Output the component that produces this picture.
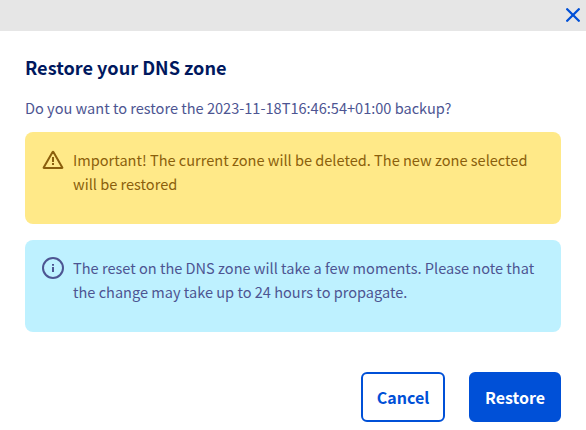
<script>
  const warning = ['Important! The current zone will be deleted. The new zone selected', 'will be restored'];
  const info = ['The reset on the DNS zone will take a few moments. Please note that', 'the change may take up to 24 hours to propagate.'];
</script>

<div class="modal">
  <header>
    <button class="close" aria-label="Close">
      <svg width="14" height="14" viewBox="0 0 14 14"><path d="M1.2 1.2 12.8 12.8M12.8 1.2 1.2 12.8" /></svg>
    </button>
  </header>
  <main>
    <h1>Restore your DNS zone</h1>
    <p class="question">Do you want to restore the 2023-11-18T16:46:54+01:00 backup?</p>
    <section class="message warning">
      <svg width="24" height="24" viewBox="0 0 24 24">
        <path class="outline" d="M11.6 4.1 2.7 19.4Q2.4 20 3 20H21Q21.6 20 21.3 19.4L12.4 4.1Q12 3.5 11.6 4.1z" />
        <path class="mark" d="M12 9v5M12 15v2" />
      </svg>
      <p>{warning[0]}<br />{warning[1]}</p>
    </section>
    <section class="message info">
      <svg width="24" height="24" viewBox="0 0 24 24">
        <circle class="outline" cx="12" cy="12" r="10" />
        <path class="mark" d="M12 8v1.7M12 11v5" />
      </svg>
      <p>{info[0]}<br />{info[1]}</p>
    </section>
    <footer>
      <button class="cancel">Cancel</button>
      <button class="restore">Restore</button>
    </footer>
  </main>
</div>

<style>
  :global(body) { margin: 0; background: #fff; }
  .modal {
    height: 430px;
    overflow: hidden;
    font-family: "Source Sans Pro", "Noto Sans CJK SC", sans-serif;
    font-size: 14.57px;
    line-height: 24px;
    color: #4d5592;
    white-space: nowrap;
  }
  header { height: 31px; background: #e6e6e6; display: flex; justify-content: flex-end; }
  button { font-family: inherit; box-sizing: border-box; margin: 0; }
  .close { width: 14px; height: 14px; margin: 8px 6px 0 0; padding: 0; border: 0; background: none; }
  svg { display: block; flex: none; fill: none; stroke: currentColor; }
  .close svg { stroke: #0050d7; stroke-width: 2.3; stroke-linecap: round; }
  main { padding: 24px 25px 0; }
  h1 { margin: 0; font-size: 18.1px; line-height: 24px; font-weight: 700; color: #00185e; }
  p { margin: 0; }
  .question { margin-top: 17px; margin-bottom: 12px; }
  .message {
    box-sizing: border-box;
    height: 92px;
    padding: 16px;
    border-radius: 8px;
    display: flex;
    gap: 8px;
  }
  .warning { background: #ffe988; color: #8b5f0c; }
  .info { background: #bef1ff; margin-top: 16px; }
  .outline { stroke-width: 2; stroke-linejoin: round; }
  .mark { stroke-width: 2; }
  footer { display: flex; justify-content: flex-end; gap: 24px; margin-top: 40px; }
  footer button { height: 50px; padding: 0; border: 2px solid #0050d7; border-radius: 6px; font-size: 16px; font-weight: 600; line-height: 24px; }
  .cancel { width: 84px; background: #fff; color: #0050d7; }
  .restore { width: 92px; background: #0050d7; color: #fff; }
</style>
